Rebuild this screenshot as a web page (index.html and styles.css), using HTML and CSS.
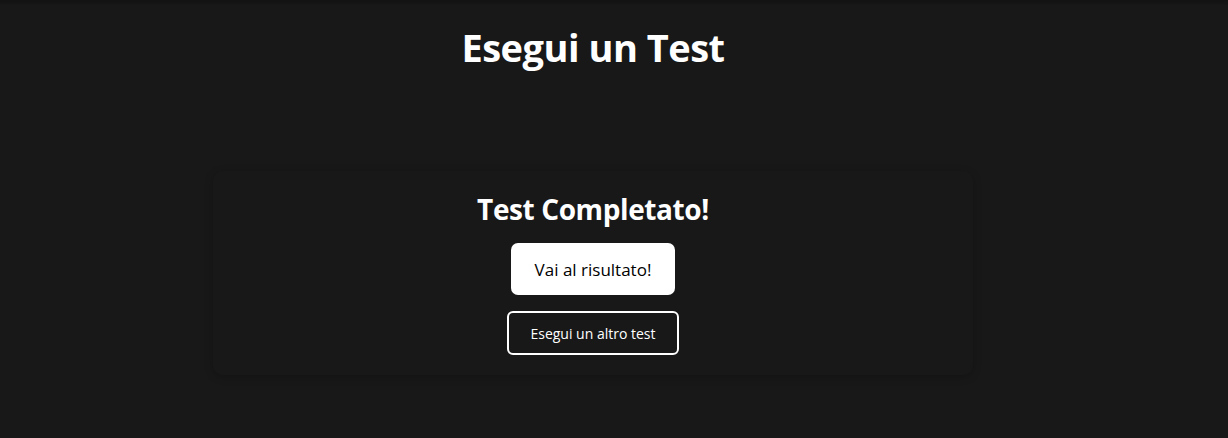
FILE: index.html
```html
<!DOCTYPE html>
<html lang="it">
<head>
<meta charset="utf-8">
<title>Esegui un Test</title>
<link rel="stylesheet" href="styles.css">
</head>
<body>
<div class="topshade"></div>
<main class="page">
  <h1 class="title">Esegui un Test</h1>
  <section class="card">
    <h2 class="card-title">Test Completato!</h2>
    <button class="btn-primary">Vai al risultato!</button>
    <button class="btn-outline">Esegui un altro test</button>
  </section>
</main>
</body>
</html>
```

FILE: styles.css
```css
html, body {
  margin: 0;
  padding: 0;
  background: #181818;
  color: #ffffff;
  font-family: "Open Sans", "Noto Sans", sans-serif;
  height: 100%;
  overflow: hidden;
}
.topshade {
  position: absolute;
  top: 0;
  left: 0;
  right: 0;
  height: 6px;
  background: linear-gradient(#121212, #181818);
}
.page {
  width: 1186px;
  display: flex;
  flex-direction: column;
  align-items: center;
}
.title {
  margin: 24px 0 0;
  font-size: 38px;
  font-weight: 700;
  line-height: 46px;
  letter-spacing: -0.5px;
}
.card {
  margin-top: 101px;
  width: 760px;
  box-sizing: border-box;
  padding: 18px 0 20px;
  display: flex;
  flex-direction: column;
  align-items: center;
  border-radius: 10px;
  box-shadow: 0 2px 8px rgba(0, 0, 0, 0.22);
}
.card-title {
  margin: 0;
  font-size: 28px;
  font-weight: 700;
  line-height: 40px;
  letter-spacing: -0.4px;
}
.btn-primary {
  margin-top: 14px;
  width: 164px;
  height: 52px;
  background: #ffffff;
  color: #000000;
  border: none;
  border-radius: 7px;
  font-family: inherit;
  font-size: 17px;
  cursor: pointer;
}
.btn-outline {
  margin-top: 16px;
  width: 172px;
  height: 44px;
  background: transparent;
  color: #ffffff;
  border: 2px solid #ffffff;
  border-radius: 6px;
  font-family: inherit;
  font-size: 14px;
  cursor: pointer;
}
```
